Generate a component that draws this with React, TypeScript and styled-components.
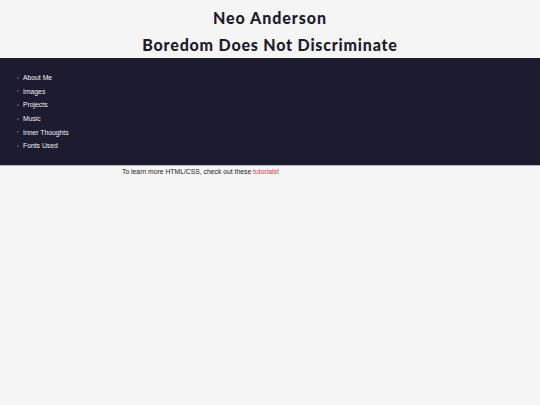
import styled, { createGlobalStyle } from "styled-components";

const GlobalStyle = createGlobalStyle`
  html, body {
    margin: 0;
    padding: 0;
    background: #f5f5f5;
  }
  body {
    font-family: "Liberation Sans", Arial, sans-serif;
    color: #222;
  }
`;

const Page = styled.div`
  width: 540px;
  min-height: 405px;
  background: #f5f5f5;
`;

const Header = styled.header`
  display: flex;
  flex-direction: column;
  align-items: center;
  padding-top: 8px;
  gap: 7px;
  height: 58px;
  box-sizing: border-box;
`;

const Title = styled.h1`
  margin: 0;
  font-family: "Lato", "DejaVu Sans", sans-serif;
  font-weight: 900;
  font-size: 16px;
  letter-spacing: 0.95px;
  line-height: 20px;
  color: #1d1c2c;
`;

const Subtitle = styled(Title)`
  letter-spacing: 0.8px;
`;

const Nav = styled.nav`
  background: #1c1b30;
  border-bottom: 1px solid #b8b6cc;
  height: 108px;
  box-sizing: border-box;
  padding: 13px 0 0 17px;
`;

const Menu = styled.ul`
  margin: 0;
  padding: 0;
  list-style: none;
  display: flex;
  flex-direction: column;
`;

const Item = styled.li`
  display: flex;
  align-items: center;
  height: 13.6px;
  font-size: 6.8px;
  color: #f2f2f2;

  &::before {
    content: "";
    width: 2px;
    height: 2px;
    border-radius: 50%;
    background: #55546a;
    margin-right: 4px;
  }
`;

const Note = styled.p`
  margin: 2px 0 0 122px;
  font-size: 6.8px;
  color: #222;
`;

const Link = styled.a`
  color: #e2374c;
  text-decoration: none;
`;

const items = ["About Me", "Images", "Projects", "Music", "Inner Thoughts", "Fonts Used"];

export default function App() {
  return (
    <Page>
      <GlobalStyle />
      <Header>
        <Title>Neo Anderson</Title>
        <Subtitle>Boredom Does Not Discriminate</Subtitle>
      </Header>
      <Nav>
        <Menu>
          {items.map((it) => (
            <Item key={it}>{it}</Item>
          ))}
        </Menu>
      </Nav>
      <Note>
        To learn more HTML/CSS, check out these <Link href="#">tutorials</Link>!
      </Note>
    </Page>
  );
}
